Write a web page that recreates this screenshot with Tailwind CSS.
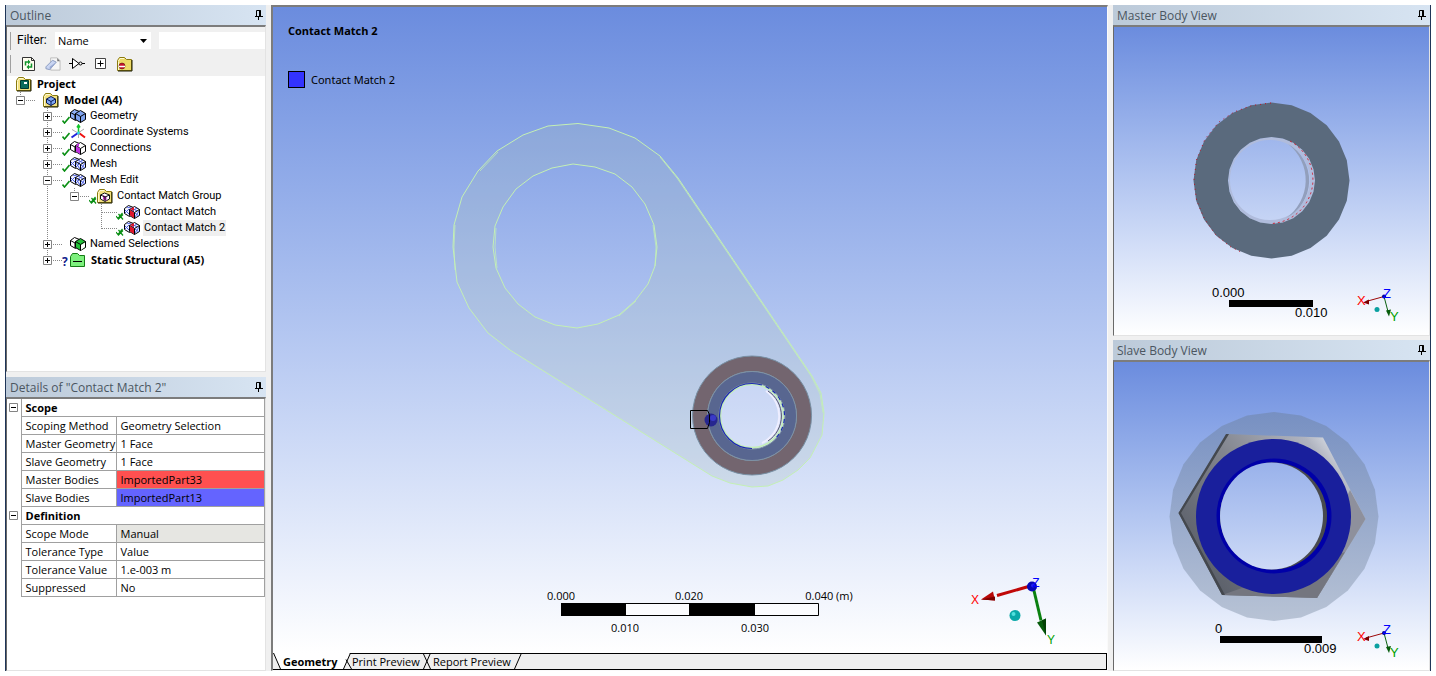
<!DOCTYPE html>
<html lang="en">
<head>
<meta charset="utf-8">
<meta name="viewport" content="width=device-width, initial-scale=1">
<title>Contact Match 2</title>
<script src="https://cdn.jsdelivr.net/npm/@tailwindcss/browser@4"></script>
</head>
<body class="bg-white font-['Open_Sans','Noto_Sans',sans-serif] text-[11px] leading-4 text-black">

<svg class="hidden" aria-hidden="true">
  <defs>
    <symbol id="pin" viewBox="0 0 8 10"><path d="M1.5 6V.5h4V6M4.5 .5V6M5.5 .5V6M0 6.5h8M3.5 6.5V10" fill="none" stroke="#000"/></symbol>
    <symbol id="plus" viewBox="0 0 9 9"><path d="M.5 .5h8v8h-8z" fill="#fff" stroke="#848484"/><path d="M2 4.5h5M4.5 2v5" stroke="#000"/></symbol>
    <symbol id="minus" viewBox="0 0 9 9"><path d="M.5 .5h8v8h-8z" fill="#fff" stroke="#848484"/><path d="M2 4.5h5" stroke="#000"/></symbol>
    <symbol id="check" viewBox="0 0 8 8"><path d="M.5 4.500 2.500 7 7.500 1" fill="none" stroke="#0a8f14" stroke-width="1.600"/></symbol>
    <symbol id="cross" viewBox="0 0 8 8"><path d="M0 4 2 6.500 6.500 1M2.500 2 7 7.500M2 7.500 7 2.500" fill="none" stroke="#0a8f14" stroke-width="1.200"/></symbol>
    <symbol id="folder" viewBox="0 0 16 16"><path d="M.5 4.500 2.500 1.500h5l2 2h5v11H.5z" stroke="#8a7a10"/><path d="M1.500 5 3 2.500h4M1.500 14V5.500" stroke="#fffbd0" fill="none"/><path d="M15 4v11H1" stroke="#1a1a00" fill="none"/></symbol>
    <symbol id="cubes" viewBox="0 0 16 16">
      <path d="M.5 4.500 4.500 1.500 9.500 3.500 9.500 9.500 5.500 12.500.5 9.500z" stroke="#000"/>
      <path d="M.5 4.500 5 7v5" fill="none" stroke="#000"/>
      <path d="M5.500 5.500 10.500 2.500 15.500 5.500V11.500L10.500 14.500 5.500 11.500z" fill="currentColor" stroke="#000"/>
      <path d="M5.500 5.500 10.500 8.500 15.500 5.500M10.500 8.500v6" fill="none" stroke="#000"/>
    </symbol>
    <symbol id="meshcubes" viewBox="0 0 16 16">
      <path d="M.5 4.500 4.500 1.500 9.500 3.500 9.500 9.500 5.500 12.500.5 9.500z" stroke="#000" fill="#eef0ff"/>
      <path d="M5.500 5.500 10.500 2.500 15.500 5.500V11.500L10.500 14.500 5.500 11.500z" fill="#eef0ff" stroke="#000"/>
      <path d="M1 6 5 10M1 9l4-4M3 3l4 1M6 7l4 6M6 11l4-4M11 13l4-6M11 9l4 3M8 4l5 3M13 4 8 7" fill="none" stroke="#4b5fe0"/>
      <path d="M5.500 5.500 10.500 8.500 15.500 5.500M10.500 8.500v6" fill="none" stroke="#000"/>
    </symbol>
    <symbol id="triad" viewBox="0 0 80 72">
      <path d="M57 13 22 23" stroke="#c00808" stroke-width="3"/><path d="M6 27 18 19 20 28z" fill="#b80808"/><path d="M6 27 20 24v4z" fill="#7c0000"/>
      <path d="M58 14 66 48" stroke="#0a8010" stroke-width="3"/><path d="M71 63 62 50 71 46z" fill="#075c0c"/><path d="M71 63 67 48 71 46z" fill="#044006"/>
      <circle cx="57" cy="14" r="5" fill="#0707b8"/><circle cx="58" cy="13" r="2" fill="#2020e8"/>
      <circle cx="40" cy="43" r="5.500" fill="#0aa8a8"/><circle cx="38.500" cy="41.500" r="2" fill="#50e0dd"/>
    </symbol>
    <symbol id="minitriad" viewBox="0 0 40 40">
      <path d="M26 9 8 14" stroke="#9c0808"/><path d="M5 15l6-3v5z" fill="#7c0000"/>
      <path d="M26 9 30 24" stroke="#0a6010"/><path d="M31 29l-3-6 5-1z" fill="#075c0c"/>
      <circle cx="26" cy="9" r="2" fill="#00008c"/><circle cx="19" cy="22" r="2.500" fill="#0aa0a0"/>
    </symbol>
  </defs>
</svg>

<div class="h-screen p-[5px]">
<div class="flex h-full gap-[5px] border-x border-[#1f3558] bg-[#f0f0f0]">

  <!-- Outline and details -->
  <aside class="flex w-[260px] shrink-0 flex-col gap-[5px]">
    <section class="flex min-h-0 flex-[5] flex-col">
      <header class="flex h-5 shrink-0 items-center justify-between bg-linear-to-r from-[#bccad9] to-[#d7e4f2] pr-[3px] pl-1">
        <h2 class="pt-px text-xs leading-5 text-[#4b5661]">Outline</h2>
        <button type="button" aria-label="Pin outline"><svg class="h-[10px] w-2"><use href="#pin"/></svg></button>
      </header>
      <div class="flex min-h-0 flex-1 flex-col border border-t-2 border-t-[#7c7c7c] border-r-[#e3e3e3] border-b-[#e3e3e3] border-l-[#696969] bg-white">
        <div class="flex h-[25px] shrink-0 items-center bg-[#f0f0f0] pt-[2px] pl-[3px]">
          <span class="h-[18px] w-px bg-[#a0a0a0]"></span>
          <label for="filter" class="w-[44px] pb-px pl-[6px] font-['Roboto',sans-serif] text-xs leading-4">Filter:</label>
          <div class="relative flex h-[17px] w-[96px]">
            <select id="filter" class="w-full appearance-none bg-white pl-[3px] text-[11px] leading-4"><option>Name</option></select>
            <svg class="pointer-events-none absolute top-[7px] right-1 h-1 w-[7px]" viewBox="0 0 7 4"><path d="M0 0h7L3.500 4z"/></svg>
          </div>
          <input type="text" aria-label="Filter text" class="ml-2 h-[17px] min-w-0 flex-1 bg-white px-1">
        </div>
        <div class="flex h-6 shrink-0 items-center bg-[#f0f0f0] pl-[3px]">
          <span class="mr-[10px] h-[18px] w-px bg-[#a0a0a0]"></span>
          <div class="flex items-center gap-2">
            <button type="button" aria-label="Refresh"><svg class="size-4" viewBox="0 0 16 16"><path d="M1.500 1.500h9l3 3v10h-12z" fill="#fffdf0" stroke="#333"/><path d="M10.500 1.500v3h3" fill="none" stroke="#333"/><path d="M4.500 9.500V6h3" fill="none" stroke="#11952b" stroke-width="1.500"/><path d="M7 3.500v5L9.500 6z" fill="#11952b"/><path d="M10.500 7.500V11h-3" fill="none" stroke="#11952b" stroke-width="1.500"/><path d="M8 8.500v5L5.500 11z" fill="#11952b"/></svg></button>
            <button type="button" aria-label="Clear"><svg class="size-4" viewBox="0 0 17 16"><path d="M6 1.500h7l3 3v10H6z" fill="#f6f6f6" stroke="#bbb"/><path d="M13 1.500 16 5h-3z" fill="#777"/><path d="M1 11 8 4l4 2-7 8-4-1z" fill="#c9d5f2" stroke="#8899bd"/><path d="m5 11 7-5-7 8z" fill="#98a9d3"/></svg></button>
            <button type="button" aria-label="Flow"><svg class="size-4" viewBox="0 0 16 16"><path d="M0 7.500h3M3.500 2.500v10L10 7.500zM13 7.500h3" fill="#fff" stroke="#000"/><circle cx="11.500" cy="7.500" r="1.500" fill="#fff" stroke="#000"/></svg></button>
            <button type="button" aria-label="Expand all"><svg class="size-4" viewBox="0 0 16 16"><path d="M2.500 2.500h10v10h-10z" fill="#fff" stroke="#444"/><path d="M4.500 7.500h6M7.500 4.500v6" stroke="#000"/></svg></button>
            <button type="button" aria-label="Hide folders"><svg class="size-4" fill="#ecd968"><use href="#folder"/><circle cx="5" cy="10" r="3" fill="#c8102e" stroke="#400" stroke-width=".5"/><path d="M2 10.500h6" stroke="#fff" stroke-width="1.500"/></svg></button>
          </div>
        </div>
        <div class="relative min-h-0 flex-1 overflow-hidden">
          <svg class="absolute top-0 left-0 h-[200px] w-[130px]" viewBox="7 76 130 200" fill="none" stroke="#888" stroke-dasharray="1 1">
            <path d="M20.500 92v4M26 100.500h9M47.500 108v148M53 116.500h9M53 132.500h9M53 148.500h9M53 164.500h9M53 180.500h9M53 244.500h9M53 260.500h9M74.500 188v4M80 196.500h9M101.500 204v25M102 212.500h15M102 228.500h15"/>
          </svg>
          <ul class="relative font-['Roboto',sans-serif] whitespace-nowrap">
            <li class="flex h-4 items-center pl-[9px]"><svg class="size-4" fill="#f3e180"><use href="#folder"/><path d="M4.500 4.500h8v8h-8z" fill="#0b6b5c" stroke="#003a30"/><path d="M8 6h3v2H8z" fill="#fff"/></svg><span class="pl-[5px] font-['Noto_Sans',sans-serif] font-bold">Project</span></li>
            <li class="flex h-4 items-center pl-[9px]"><button type="button" aria-label="Collapse Model" class="mr-[18px]"><svg class="size-[9px]"><use href="#minus"/></svg></button><svg class="size-4" fill="#f3e180"><use href="#folder"/><path d="M3.500 7 8 4.500 12.500 7v4L8 13.500 3.500 11z" fill="#7fa6f5" stroke="#0a1a50"/><path d="M3.500 7 8 9.500 12.500 7M8 9.500v4" stroke="#0a1a50" fill="none"/></svg><span class="pl-[5px] font-['Noto_Sans',sans-serif] font-bold">Model (A4)</span></li>
            <li class="flex h-4 items-center pl-9"><button type="button" aria-label="Expand Geometry" class="mr-[10px]"><svg class="size-[9px]"><use href="#plus"/></svg></button><svg class="mt-[7px] size-2"><use href="#check"/></svg><svg class="size-4 text-[#7ea2ee]" fill="#8fb0f5"><use href="#cubes"/></svg><span class="pl-1">Geometry</span></li>
            <li class="flex h-4 items-center pl-9"><button type="button" aria-label="Expand Coordinate Systems" class="mr-[10px]"><svg class="size-[9px]"><use href="#plus"/></svg></button><svg class="mt-[7px] size-2"><use href="#check"/></svg><svg class="size-4" viewBox="0 0 16 16" fill="none"><path d="M2 5.500 8 9l6-4M8.500 10v4" stroke="#aaa"/><path d="M8.500 9V1M7 3.500 8.500 1l1.500 2.500" stroke="#12c62a" stroke-width="1.500"/><path d="M8 9 1.500 13.500" stroke="#2222dd" stroke-width="2"/><path d="m9 9 6 4.500" stroke="#ee1111" stroke-width="2"/><circle cx="8.500" cy="9" r="1.500" fill="#30d8e8"/></svg><span class="pl-1">Coordinate Systems</span></li>
            <li class="flex h-4 items-center pl-9"><button type="button" aria-label="Expand Connections" class="mr-[10px]"><svg class="size-[9px]"><use href="#plus"/></svg></button><svg class="mt-[7px] size-2"><use href="#check"/></svg><svg class="size-4 text-white" fill="#fff"><use href="#cubes"/><path d="M6 6l4 2.500V14l-4-2.500zM6 5l3-2v4z" fill="#c030e0"/></svg><span class="pl-1">Connections</span></li>
            <li class="flex h-4 items-center pl-9"><button type="button" aria-label="Expand Mesh" class="mr-[10px]"><svg class="size-[9px]"><use href="#plus"/></svg></button><svg class="mt-[7px] size-2"><use href="#check"/></svg><svg class="size-4"><use href="#meshcubes"/></svg><span class="pl-1">Mesh</span></li>
            <li class="flex h-4 items-center pl-9"><button type="button" aria-label="Collapse Mesh Edit" class="mr-[10px]"><svg class="size-[9px]"><use href="#minus"/></svg></button><svg class="mt-[7px] size-2"><use href="#check"/></svg><svg class="size-4"><use href="#meshcubes"/></svg><span class="pl-1">Mesh Edit</span></li>
            <li class="flex h-4 items-center pl-[63px]"><button type="button" aria-label="Collapse Contact Match Group" class="mr-[10px]"><svg class="size-[9px]"><use href="#minus"/></svg></button><svg class="mt-[7px] size-2"><use href="#cross"/></svg><svg class="size-4" fill="#f3e180"><use href="#folder"/><path d="M3.500 7 7.500 5l5 2v4L8 13.500 3.500 11z" fill="#fff" stroke="#111"/><path d="m6 7 3.500 2v4L6 11.500z" fill="#c030c0"/><path d="M3.500 7 8 9l4.500-2M8 9v4" stroke="#111" fill="none"/></svg><span class="pl-1">Contact Match Group</span></li>
            <li class="flex h-4 items-center pl-[109px]"><svg class="mt-[7px] size-2"><use href="#cross"/></svg><svg class="size-4"><use href="#meshcubes"/><path d="M6 6l4 2.500V14l-4-2.500zM6 5l4-2v4z" fill="#e0152c"/></svg><span class="pl-1">Contact Match</span></li>
            <li class="flex h-4 items-center pl-[109px]"><svg class="mt-[7px] size-2"><use href="#cross"/></svg><svg class="size-4"><use href="#meshcubes"/><path d="M6 6l4 2.500V14l-4-2.500zM6 5l4-2v4z" fill="#e0152c"/></svg><span class="ml-[3px] bg-[#efefef] px-px">Contact Match 2</span></li>
            <li class="flex h-4 items-center pl-9"><button type="button" aria-label="Expand Named Selections" class="mr-[18px]"><svg class="size-[9px]"><use href="#plus"/></svg></button><svg class="size-4 text-[#23c23a]" fill="#fff"><use href="#cubes"/><path d="M11 9l4-2.500V11l-4 3z" fill="#fff"/></svg><span class="pl-1">Named Selections</span></li>
            <li class="flex h-4 items-center pl-9"><button type="button" aria-label="Expand Static Structural" class="mr-[10px]"><svg class="size-[9px]"><use href="#plus"/></svg></button><span class="w-2 pt-1 font-['Noto_Sans',sans-serif] text-xs leading-3 font-bold text-[#10208c]">?</span><svg class="size-4" fill="#7df07d" viewBox="0 0 16 16"><path d="M.5 4.500 2.500 1.500h5l2 2h5v11H.5z" stroke="#147a14"/><path d="M3 9.500h9" stroke="#000"/></svg><span class="pl-[5px] font-['Noto_Sans',sans-serif] font-bold">Static Structural (A5)</span></li>
          </ul>
        </div>
      </div>
    </section>

    <section class="flex min-h-0 flex-[4] flex-col">
      <header class="flex h-5 shrink-0 items-center justify-between bg-linear-to-r from-[#bccad9] to-[#d7e4f2] pr-[3px] pl-1">
        <h2 class="pt-px text-xs leading-5 text-[#4b5661]">Details of "Contact Match 2"</h2>
        <button type="button" aria-label="Pin details"><svg class="h-[10px] w-2"><use href="#pin"/></svg></button>
      </header>
      <div class="min-h-0 flex-1 overflow-hidden border border-t-2 border-t-[#7c7c7c] border-r-[#e3e3e3] border-b-[#e3e3e3] border-l-[#696969] bg-white">
        <table class="-mt-px w-full table-fixed border-collapse [&_td]:border [&_td]:border-[#a0a0a0] [&_td]:pl-1 [&_th]:border [&_th]:border-[#a0a0a0] [&_th]:pl-1 [&_th]:text-left [&_tr]:h-[18px]">
          <colgroup><col class="w-[14px]"><col class="w-[95px]"><col></colgroup>
          <tbody class="font-normal whitespace-nowrap">
            <tr><td rowspan="6" class="border-y-0! border-l-0! pl-[2px]! align-top"><button type="button" aria-label="Collapse Scope" class="mt-1 block"><svg class="size-[9px]"><use href="#minus"/></svg></button></td><th colspan="2" class="font-bold">Scope</th></tr>
            <tr><th class="font-normal">Scoping Method</th><td>Geometry Selection</td></tr>
            <tr><th class="font-normal">Master Geometry</th><td>1 Face</td></tr>
            <tr><th class="font-normal">Slave Geometry</th><td>1 Face</td></tr>
            <tr><th class="font-normal">Master Bodies</th><td class="bg-[#ff5050]">ImportedPart33</td></tr>
            <tr><th class="font-normal">Slave Bodies</th><td class="bg-[#6464ff]">ImportedPart13</td></tr>
            <tr><td rowspan="5" class="border-y-0! border-l-0! pl-[2px]! align-top"><button type="button" aria-label="Collapse Definition" class="mt-1 block"><svg class="size-[9px]"><use href="#minus"/></svg></button></td><th colspan="2" class="font-bold">Definition</th></tr>
            <tr><th class="font-normal">Scope Mode</th><td class="bg-[#e6e6e2]">Manual</td></tr>
            <tr><th class="font-normal">Tolerance Type</th><td>Value</td></tr>
            <tr><th class="font-normal">Tolerance Value</th><td>1.e-003 m</td></tr>
            <tr><th class="font-normal">Suppressed</th><td>No</td></tr>
          </tbody>
        </table>
      </div>
    </section>
  </aside>

  <!-- Main viewport -->
  <main class="flex min-w-0 flex-1 flex-col border-t-2 border-r border-b border-l-2 border-t-[#7c7c7c] border-r-[#fafafa] border-b-[#fafafa] border-l-[#7c7c7c]">
    <div class="relative min-h-0 flex-1 bg-linear-to-b from-[#6b8cde] to-white">
      <svg class="absolute inset-0 h-full w-full" viewBox="273 7 834 646" role="img" aria-label="Linkage model">
        <g fill="none" stroke="#c4f0b4">
          <path fill="#aabeb5" fill-opacity=".22" fill-rule="evenodd" stroke="none" d="M578 123.500 609 128 635 138 660 156 678 178 812 376 821 393 824 413 822 435 810 458 798 470 783 480 768 486 752 487 730 483 712 476 510 350 488 333 469 308 457 282 453 247 454 225 462 197 478 171 497 151 523 135 548 126zM657 247 654 225 645 204 632 187 615 174 595 167 573 164 552 168 533 176 516 189 503 207 495 226 493 247 496 268 505 288 518 304 535 317 555 325 577 328 598 324 619 315 635 301 648 284 655 266zM752 383a33 33 0 1 1-.1 0z"/>
          <path d="M578 123.500 609 128 635 138 660 156 678 178 812 376 821 393 824 413 822 435 810 458 798 470 783 480 768 486 752 487 730 483 712 476 510 350 488 333 469 308 457 282 453 247 454 225 462 197 478 171 497 151 523 135 548 126zM657 247 654 225 645 204 632 187 615 174 595 167 573 164 552 168 533 176 516 189 503 207 495 226 493 247 496 268 505 288 518 304 535 317 555 325 577 328 598 324 619 315 635 301 648 284 655 266z"/>
          <path stroke-width=".7" d="M660 157 677 178 811 376 820 394 823 413M455 270 454 247 455 225M480 171 498 152M655 266 656 247 653 225M619 316 636 301M496 228 495 247 497 268"/>
        </g>
        <path fill="#73656f" fill-rule="evenodd" stroke="#7890a4" d="M752 356a59.500 59.500 0 1 0 .1 0zM752 371.500a44.500 44.500 0 1 1-.1 0z"/>
        <path fill="#586690" fill-rule="evenodd" stroke="#8093a5" d="M752 371.500a44.500 44.500 0 1 0 .1 0zM752 383a33 33 0 1 1-.1 0z"/>
        <circle cx="752" cy="416" r="31.500" fill="#fff" fill-opacity=".15" stroke="#c4f0b4" stroke-width="1.500"/>
        <circle cx="752" cy="416" r="32.500" fill="none" stroke="#1c28b0" stroke-width="1.200" stroke-dasharray="112 4 4 4 4 4 4 4 4 4 4 4 4 4 4 4 4 60" transform="rotate(90 752 416)"/>
        <path d="M766 391a30 30 0 0 1-4 52" fill="none" stroke="#eef" stroke-width="2"/>
        <path d="M768 391a30 30 0 0 1 0 50" fill="none" stroke="#556"/>
        <circle cx="711" cy="420" r="6.500" fill="#26268f"/><circle cx="713" cy="418" r="3" fill="#3a3ac8"/>
        <path d="M690.500 410.500h17l2 4v8l-2 6h-17z" fill="none" stroke="#000"/>
        <path fill="#fff" fill-opacity=".6" stroke="#000" d="M561.500 603.500h257v12h-257z"/>
        <path d="M561 603h65v13h-65zM689 603h66v13h-66z"/>
        <g text-anchor="middle" font-size="11">
          <text x="561" y="600">0.000</text><text x="689" y="600">0.020</text><text x="829" y="600">0.040 (m)</text>
          <text x="625" y="632">0.010</text><text x="755" y="632">0.030</text>
        </g>
        <use href="#triad" x="975" y="572.500" width="80" height="72"/>
        <g text-anchor="middle" font-size="12" class="font-['Liberation_Sans',sans-serif]">
          <text x="975" y="604" fill="#f00">X</text><text x="1051" y="644" fill="#00a000">Y</text><text x="1036" y="587" fill="#00f">Z</text>
        </g>
      </svg>
      <div class="relative flex flex-col gap-8 pt-4 pl-[15px]">
        <h1 class="font-bold">Contact Match 2</h1>
        <p class="flex items-center gap-[6px] font-['Noto_Sans',sans-serif]"><span class="size-[17px] border border-black bg-[#3333ff]"></span>Contact Match 2</p>
      </div>
    </div>
    <nav class="relative flex h-[17px] shrink-0 items-center border border-l-0 border-black bg-[#efefef] pl-[10px] text-[11px] leading-[15px]">
      <svg class="absolute -top-px left-0 h-[17px] w-[260px]" viewBox="0 0 260 17"><path d="M0 0h77l-7 16H7z" fill="#fff"/><path d="M.5 0 7.500 16M70.500 16 77.500 0M73 6.500 78.500 16M150 0 157.500 16M150.500 16 157.500 0M241.500 16 248.500 0" fill="none" stroke="#000"/></svg>
      <button type="button" class="relative w-[69px] text-left font-bold">Geometry</button>
      <button type="button" class="relative w-[81px] text-left">Print Preview</button>
      <button type="button" class="relative text-left">Report Preview</button>
    </nav>
  </main>

  <!-- Body views -->
  <aside class="flex w-[317px] shrink-0 flex-col gap-1">
    <section class="flex min-h-0 flex-1 flex-col">
      <header class="flex h-5 shrink-0 items-center justify-between bg-linear-to-r from-[#bccad9] to-[#d7e4f2] pr-1 pl-1">
        <h2 class="pt-px text-xs leading-5 text-[#4b5661]">Master Body View</h2>
        <button type="button" aria-label="Pin master body view"><svg class="h-[10px] w-2"><use href="#pin"/></svg></button>
      </header>
      <div class="relative min-h-0 flex-1 border border-t-2 border-t-[#7c7c7c] border-r-[#e3e3e3] border-b-[#e3e3e3] border-l-[#696969] bg-linear-to-b from-[#6b8cde] to-white">
        <svg class="absolute inset-0 h-full w-full" viewBox="1114 27 315 308" role="img" aria-label="Washer body">
          <path fill="#b0bcdc" fill-rule="evenodd" d="M1272 137a43.500 43.500 0 1 0 .1 0zM1270 140a40 40 0 1 1-.1 0z"/>
          <path d="M1288 144a42 42 0 0 1-2 74 46 46 0 0 0 2-74" fill="#929fbc"/>
          <path data-ring="1271.500 180.500 78 43.500" fill="#5a6a7d" fill-rule="evenodd"/>
          <path d="M1271 103 1252 105.500 1234 112 1219 122 1205 139 1196.500 160 1194 180 1196.500 200 1204 218 1215 234 1230 246.500 1243 253" fill="none" stroke="#c01020" stroke-dasharray="1 4"/>
          <path d="M1290 141a44 44 0 0 1-18 82.500" fill="none" stroke="#d02030" stroke-dasharray="2 3"/>
          <path d="M1229 300h84v7h-84z"/>
          <g font-size="13" class="font-['Liberation_Sans',sans-serif]">
            <text x="1212" y="297">0.000</text><text x="1295" y="317">0.010</text>
            <use href="#minitriad" x="1358" y="287.500" width="40" height="40"/>
            <text x="1357" y="305" fill="#f00">X</text><text x="1390" y="321" fill="#00a000">Y</text><text x="1383" y="298" fill="#00f">Z</text>
          </g>
        </svg>
      </div>
    </section>
    <section class="flex min-h-0 flex-1 flex-col">
      <header class="flex h-5 shrink-0 items-center justify-between bg-linear-to-r from-[#bccad9] to-[#d7e4f2] pr-1 pl-1">
        <h2 class="pt-px text-xs leading-5 text-[#4b5661]">Slave Body View</h2>
        <button type="button" aria-label="Pin slave body view"><svg class="h-[10px] w-2"><use href="#pin"/></svg></button>
      </header>
      <div class="relative min-h-0 flex-1 border border-t-2 border-t-[#7c7c7c] border-r-[#e3e3e3] border-b-[#e3e3e3] border-l-[#696969] bg-linear-to-b from-[#6b8cde] to-white">
        <svg class="absolute inset-0 h-full w-full" viewBox="1114 362 315 308" role="img" aria-label="Nut body">
          <defs>
            <mask id="bore"><path fill="#fff" d="M1114 362h315v308h-315z"/><ellipse cx="1271.500" cy="516" rx="51.500" ry="53.500" fill="#000"/></mask>
            <linearGradient id="steel" gradientUnits="userSpaceOnUse" x1="1185" y1="570" x2="1350" y2="445"><stop offset="0" stop-color="#555a64"/><stop offset=".5" stop-color="#83868f"/><stop offset=".85" stop-color="#b0b4c0"/><stop offset=".94" stop-color="#d4d8e0"/><stop offset="1" stop-color="#9a9fae"/></linearGradient>
            <linearGradient id="flange" x1="0" y1="0" x2="0" y2="1"><stop offset="0" stop-color="#7790c2"/><stop offset="1" stop-color="#b8c3d5"/></linearGradient>
          </defs>
          <g mask="url(#bore)">
            <path data-ring="1274 516.500 104.500 0" fill="url(#flange)"/>
            <path d="M1227 434 1323 437.500 1365.500 519 1317 598 1222 595 1178.500 513z" fill="url(#steel)"/>
            <path d="M1350 490 1365.500 519 1317 598 1300 594z" fill="#8e909c"/>
            <path d="M1222 595 1317 598 1345 552z" fill="#74767f"/>
            <path d="M1229 434h-3L1178.500 513 1222 595h3L1181 513z" fill="#44484e"/>
            <circle cx="1273.500" cy="516.500" r="77.500" fill="#191f9c"/>
            <circle cx="1274" cy="516" r="57.500" fill="#0000a8"/>
            <circle cx="1273.500" cy="516" r="53.500" fill="#484a4e"/>
          </g>
          <path d="M1220 636h102v7h-102z"/>
          <g font-size="13" class="font-['Liberation_Sans',sans-serif]">
            <text x="1215" y="633">0</text><text x="1304" y="653">0.009</text>
            <use href="#minitriad" x="1358" y="624" width="40" height="40"/>
            <text x="1357" y="641" fill="#f00">X</text><text x="1390" y="657" fill="#00a000">Y</text><text x="1383" y="634" fill="#00f">Z</text>
          </g>
        </svg>
      </div>
    </section>
  </aside>
</div>
</div>

<script>
  // Faceted discs: each circle is tessellated into 24 straight edges.
  document.querySelectorAll('[data-ring]').forEach(function (el) {
    var v = el.dataset.ring.split(' ').map(Number);
    function loop(r) {
      var p = [];
      for (var i = 0; i < 24; i++) {
        var a = i * Math.PI / 12;
        p.push((v[0] + r * Math.cos(a)).toFixed(1) + ' ' + (v[1] + r * Math.sin(a)).toFixed(1));
      }
      return 'M' + p.join('L') + 'Z';
    }
    el.setAttribute('d', loop(v[2]) + (v[3] ? loop(v[3]) : ''));
  });
</script>
</body>
</html>
